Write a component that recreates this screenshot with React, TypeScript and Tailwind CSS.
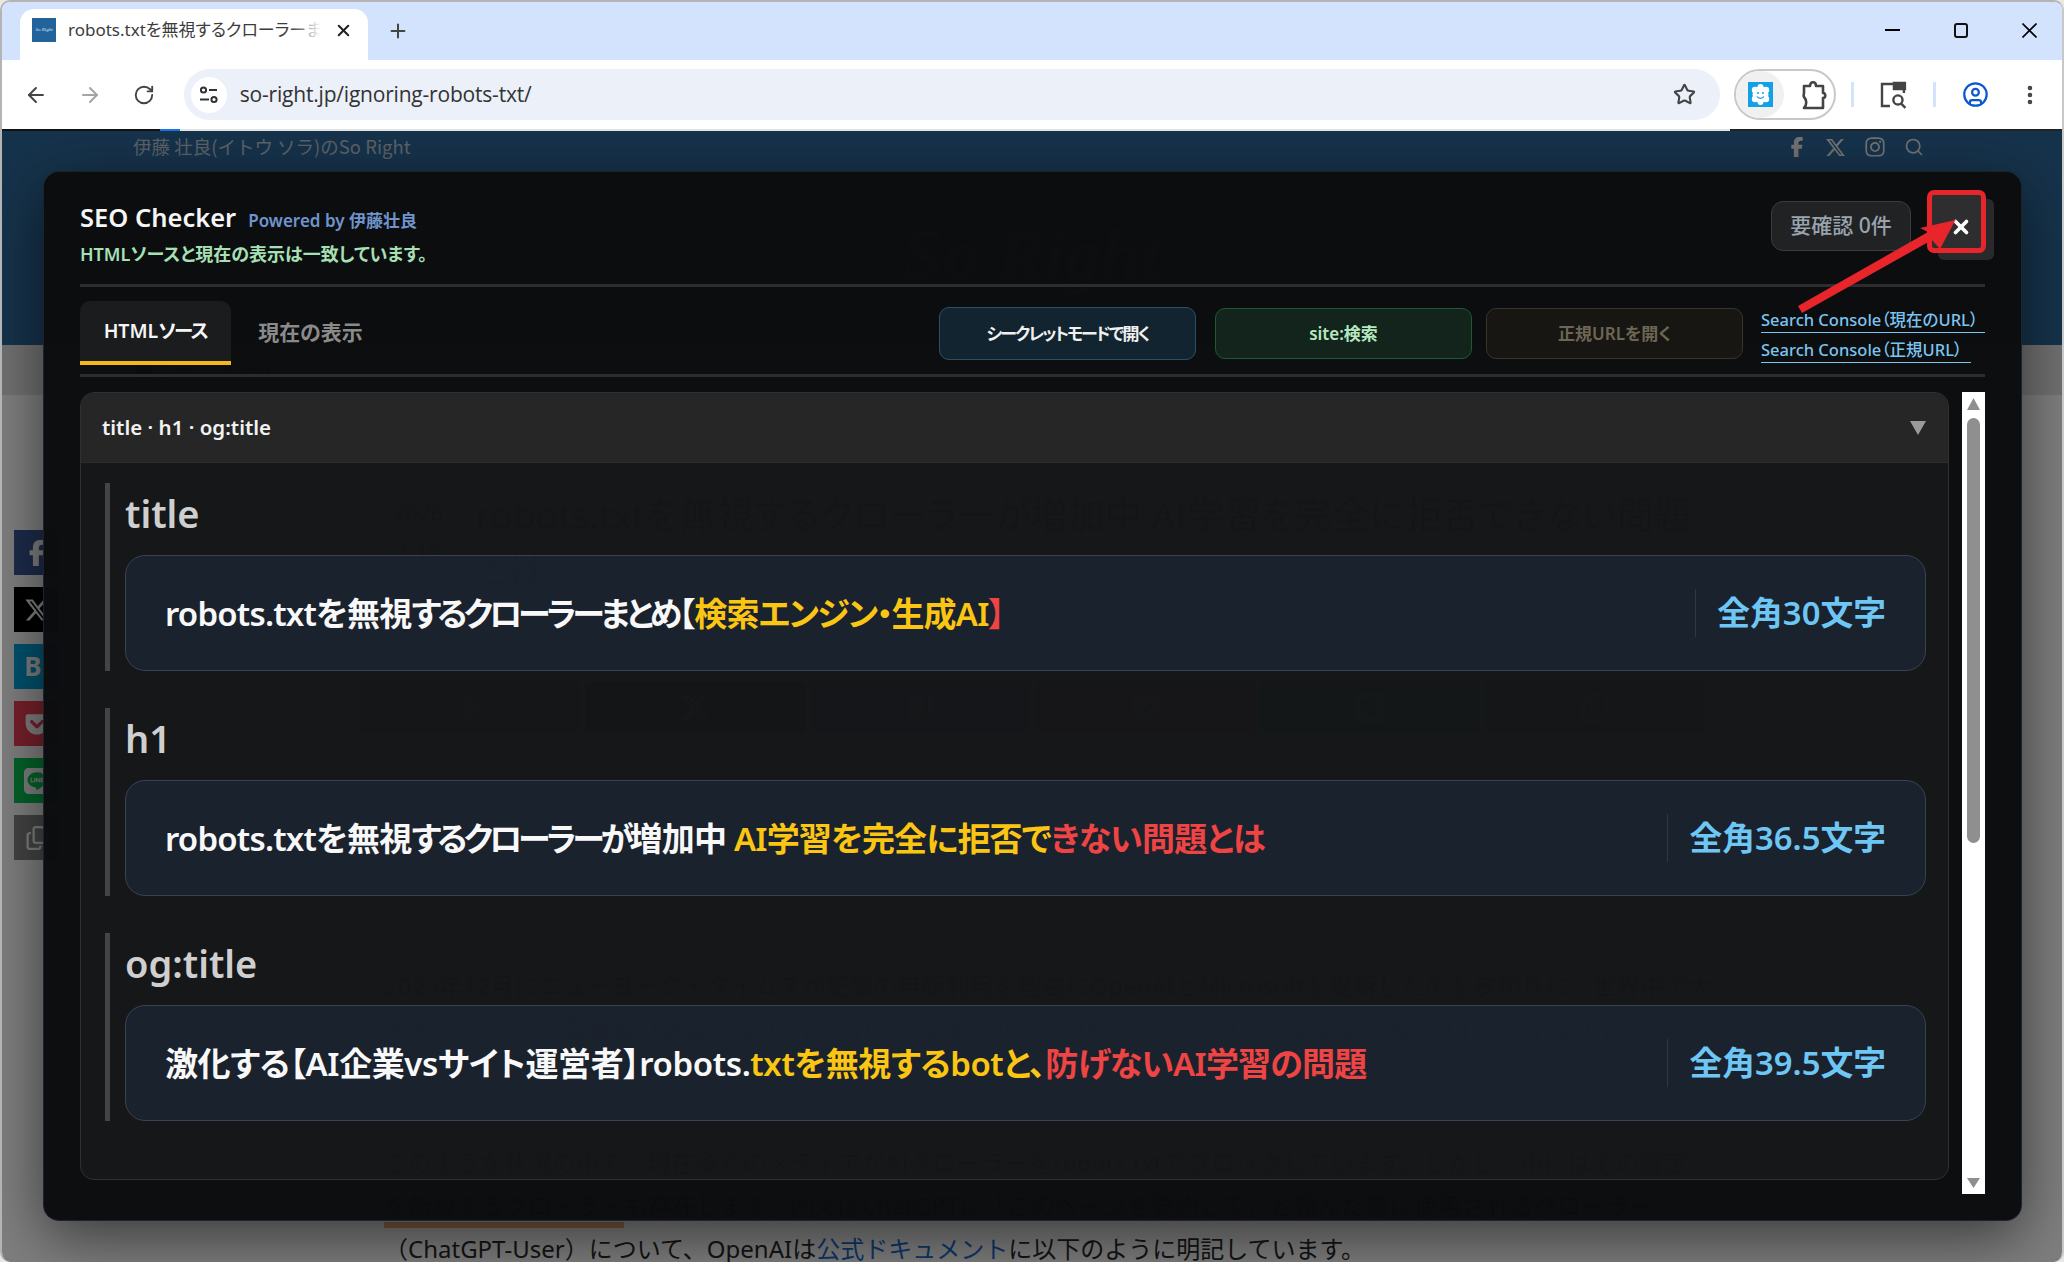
import { ArrowLeft, ArrowRight, RotateCw, Star, Plus, X, EllipsisVertical, CircleUser, Search } from "lucide-react";
import { FaFacebookF, FaXTwitter, FaInstagram, FaGetPocket, FaLine, FaRegCopy } from "react-icons/fa6";

const font = "font-['Noto_Sans','Noto_Sans_CJK_JP',sans-serif] [font-feature-settings:'palt']";
const K = "tracking-[-4px]";
const K2 = "tracking-[-1.6px]";
const Y = "text-[#fbc613]";
const R = "text-[#ef4444]";

function Card({ children, count }: { children: React.ReactNode; count: string }) {
  return (
    <div className="h-[116px] flex items-center rounded-[20px] border border-[#3a4252] bg-[#1e2a3a]/60 pl-[39px] pr-[39px]">
      <div className="flex-1 whitespace-nowrap text-[33px] tracking-[-0.8px] font-semibold text-[#f8f8f8] leading-none">{children}</div>
      <div className="h-[48px] border-l border-[#303644] pl-[21px] flex items-center text-[32.8px] font-semibold text-[#6ec6f5] leading-none whitespace-nowrap">{count}</div>
    </div>
  );
}

function Section({ label, children, count }: { label: string; children: React.ReactNode; count: string }) {
  return (
    <div className="border-l-[5px] border-[#444] pl-[15px] mb-[37px]">
      <div className="h-[72px] flex items-center pb-[12px] text-[38px] font-semibold leading-none text-[#cfcfcf]">{label}</div>
      <Card count={count}>{children}</Card>
    </div>
  );
}

export default function App() {
  return (
    <div className={`relative w-[2064px] h-[1262px] bg-[#e8e8e8] overflow-hidden ${font}`}>
      <div className="w-full h-full flex flex-col rounded-[10px] overflow-hidden border-2 border-b-0 border-[#b4b4b4] border-r-[#c8c8c8]">
        {/* tab strip */}
        <div className="h-[58px] shrink-0 bg-[#d3e3fd] flex items-end pl-[18px]">
          <div className="relative w-[348px] h-[51px] bg-white rounded-t-[14px] flex items-center pl-[12px] pb-[9px]">
            <div className="w-[24px] h-[24px] bg-[#22639c] flex items-center justify-center text-[5px] italic text-[#dfe8f0] font-['Liberation_Serif',serif] whitespace-nowrap">So Right</div>
            <div className="relative ml-[12px] w-[253px] overflow-hidden whitespace-nowrap text-[17px] text-[#3c3c3c] leading-[24px]">
              robots.txtを無視するクローラーまとめ
              <div className="absolute right-0 top-0 bottom-0 w-[30px] bg-gradient-to-r from-transparent to-white"></div>
            </div>
            <X size={19} strokeWidth={2.6} className="ml-[13px] text-[#222]" />
          </div>
          <div className="h-[51px] flex items-center ml-[19px] pb-[8px]">
            <Plus size={22} strokeWidth={2.2} className="text-[#444]" />
          </div>
          <div className="flex-1"></div>
          <div className="h-[58px] flex items-center gap-[54px] pr-[25px] pb-[2px]">
            <div className="w-[15px] h-[2px] bg-black"></div>
            <div className="w-[14px] h-[15px] rounded-[3px] border-2 border-[#111]"></div>
            <svg width="15" height="15" viewBox="0 0 15 15" stroke="#000" strokeWidth="1.6"><path d="M0.5 0.5l14 14M14.5 0.5l-14 14" /></svg>
          </div>
        </div>
        {/* toolbar */}
        <div className="h-[69px] shrink-0 bg-white flex items-center pl-[22px] pr-[20px]">
          <ArrowLeft size={24} strokeWidth={2} className="text-[#444]" />
          <ArrowRight size={24} strokeWidth={2} className="ml-[30px] text-[#a5a5a5]" />
          <RotateCw size={22} strokeWidth={2.1} className="ml-[31px] text-[#444]" />
          <div className="ml-[29px] w-[1541px] h-[51px] rounded-full bg-[#ebf0f9] flex items-center pl-[7px] pr-[24px]">
            <div className="w-[36px] h-[36px] rounded-full bg-white flex items-center justify-center">
              <svg width="20" height="20" viewBox="0 0 20 20" fill="none" stroke="#333" strokeWidth="2">
                <circle cx="4.5" cy="5" r="2.6" />
                <path d="M10 5h8" />
                <path d="M1 14.5h9" />
                <circle cx="15" cy="14.5" r="2.6" />
              </svg>
            </div>
            <span className="ml-[13px] text-[21px] text-[#333] font-['Open_Sans',sans-serif] tracking-[-0.2px] flex-1 whitespace-nowrap">so-right.jp/ignoring-robots-txt/</span>
            <Star size={23} strokeWidth={2.2} className="text-[#444]" />
          </div>
          <div className="ml-[14px] w-[103px] h-[51px] rounded-full border-2 border-[#c8c8c8] flex items-center overflow-hidden">
            <div className="w-[48px] h-full bg-[#f0f0f0] rounded-r-full flex items-center justify-center pl-[2px]">
              <svg width="25" height="25" viewBox="0 0 25 25">
                <rect width="25" height="25" fill="#12a0e6" />
                <circle cx="12.5" cy="12.5" r="8" fill="#fff" />
                <circle cx="7" cy="8" r="3.2" fill="#fff" />
                <circle cx="18" cy="8" r="3.2" fill="#fff" />
                <circle cx="7" cy="17" r="3.2" fill="#fff" />
                <circle cx="18" cy="17" r="3.2" fill="#fff" />
                <circle cx="12.5" cy="5" r="3" fill="#fff" />
                <circle cx="12.5" cy="20" r="3" fill="#fff" />
                <circle cx="10" cy="11" r="1" fill="#12a0e6" />
                <circle cx="15" cy="11" r="1" fill="#12a0e6" />
                <path d="M9 14.5c1.5 2.4 5.5 2.4 7 0" stroke="#12a0e6" strokeWidth="1.3" fill="none" />
              </svg>
            </div>
            <svg className="ml-[17px]" width="26" height="30" viewBox="0 0 26 30" fill="none" stroke="#444" strokeWidth="2.6" strokeLinejoin="round">
              <path d="M3 6h6c0-5 6-5 6 0h7v7c3 0 3 5 0 5v10H3c3-3 3-8 0-11-1-2 0-3 0-4z" />
            </svg>
          </div>
          <div className="ml-[15px] w-[3px] h-[25px] bg-[#d3e3fd]"></div>
          <svg className="ml-[26px]" width="28" height="30" viewBox="0 0 28 30" fill="none" stroke="#444" strokeWidth="2.4">
            <path d="M10 26H2V4h22v9" />
            <path d="M14 3h11v6H14z" fill="#444" />
            <circle cx="18" cy="20" r="4.6" />
            <path d="M21.5 24l4 4" />
          </svg>
          <div className="ml-[25px] w-[3px] h-[25px] bg-[#d3e3fd]"></div>
          <CircleUser size={27} strokeWidth={2} className="ml-[26px] text-[#0b57d0]" />
          <EllipsisVertical size={24} strokeWidth={2.6} className="ml-[29px] text-[#444]" />
        </div>
        <div className="h-[2px] shrink-0 flex">
          <div className="w-[158px] bg-[#111]"></div>
          <div className="w-[20px] bg-[#1a73e8]"></div>
          <div className="w-[1550px] bg-[#e3e3e3]"></div>
          <div className="flex-1 bg-[#222]"></div>
        </div>
        {/* page */}
        <div className="relative flex-1 bg-white overflow-hidden">
          <div className="h-[214px] bg-[#2d6699] relative">
            <div className="h-[32px] flex items-center pl-[131px] pr-[138px] text-[18.5px] text-[#b8c4cc] bg-[#2d6699]">
              <span className="flex-1 font-['Noto_Sans_CJK_JP',sans-serif] [font-feature-settings:normal]">伊藤 壮良(イトウ ソラ)のSo Right</span>
              <div className="flex items-center gap-[18px] text-[#e4e4e4]">
                <FaFacebookF size={20} />
                <FaXTwitter size={21} />
                <FaInstagram size={22} />
                <Search size={20} />
              </div>
            </div>
            <div className="mt-[56px] text-center text-[72px] italic font-bold font-['Liberation_Serif',serif] text-white leading-none">So Right</div>
          </div>
          <div className="h-[50px] bg-[#e2e2e2] pl-[133px] flex items-center text-[18px] text-[#555]">■ ホーム ＞ SEO ＞</div>
          <div className="pl-[358px]">
            <div className="flex items-start h-[287px] pt-[93px] text-[#111]">
              <div className="w-[116px] text-[22px] leading-[40px] pt-[4px] text-center">2026<br />2/18</div>
              <div className="w-[1222px] text-[37px] leading-[54px]">robots.txtを無視するクローラーが増加中 AI学習を完全に拒否できない問題とは</div>
            </div>
            <div className="flex gap-[5px] h-[51px]">
              <div className="w-[220px] bg-[#3b5998] text-white flex items-center justify-center"><FaFacebookF size={30} /></div>
              <div className="w-[220px] bg-black text-white flex items-center justify-center"><FaXTwitter size={30} /></div>
              <div className="w-[220px] bg-[#00a4de] text-white flex items-center justify-center text-[30px] font-bold">B!</div>
              <div className="w-[220px] bg-[#ef4056] text-white flex items-center justify-center"><FaGetPocket size={30} /></div>
              <div className="w-[220px] bg-[#06c755] text-white flex items-center justify-center"><FaLine size={30} /></div>
              <div className="w-[220px] bg-[#888] text-white flex items-center justify-center"><FaRegCopy size={30} /></div>
            </div>
            <div className="pl-[24px] pt-[231px] text-[24px] leading-[43px] text-[#2a2a2a] whitespace-nowrap [font-feature-settings:normal]">
              <p>2023年12月にニューヨーク・タイムズが記事の無断利用を理由にOpenAIとMicrosoftを提訴したのを皮切りに、世界中で大</p>
              <p>手メディア vs AI事業者の訴訟が繰り広げられています。2025年9月7日には、さらなる訴訟が起こされ、これまでになかった</p>
              <p className="h-[91px]"></p>
              <p>このような状況の中で、現在多くのメディアがAIクローラーをrobots.txtでブロックしています。しかし、中にはその設定</p>
              <p><span className="border-b-[6px] border-[#f2b27a]">を無視するクローラー</span>も存在します。例えばChatGPTに「このページを要約して」と頼んだ際に使用されるクローラー</p>
              <p>（ChatGPT-User）について、OpenAIは<span className="text-[#1a6fd0]">公式ドキュメント</span>に以下のように明記しています。</p>
            </div>
          </div>
          {/* floating share */}
          <div className="absolute left-[12px] top-[399px] w-[45px] flex flex-col gap-[12px] text-white text-[26px] font-bold">
            <div className="h-[45px] bg-[#3b5998] flex items-center justify-center"><FaFacebookF size={26} /></div>
            <div className="h-[45px] bg-black flex items-center justify-center"><FaXTwitter size={26} /></div>
            <div className="h-[45px] bg-[#00a4de] flex items-center justify-center">B!</div>
            <div className="h-[45px] bg-[#ef4056] flex items-center justify-center"><FaGetPocket size={26} /></div>
            <div className="h-[45px] bg-[#06c755] flex items-center justify-center"><FaLine size={26} /></div>
            <div className="h-[45px] bg-[#888] flex items-center justify-center"><FaRegCopy size={24} /></div>
          </div>
          {/* overlay + modal */}
          <div className="absolute inset-0 bg-black/50 pl-[41px] pt-[40px] pr-[40px] pb-[41px]">
            <div className="h-full rounded-[16px] border border-[#2a3440]/60 bg-[#0b0c0e]/[0.98] shadow-[0_16px_60px_rgba(0,0,0,0.55)] pl-[36px] pr-[36px] pt-[20px] flex flex-col">
              {/* header */}
              <div className="h-[95px] shrink-0 flex items-start border-b-[3px] border-[#2d2d2f]">
                <div className="flex-1 pt-[13px]">
                  <div className="flex items-baseline gap-[12px] h-[38px]">
                    <span className="text-[25.5px] font-semibold text-[#f5f5f5] leading-none">SEO Checker</span>
                    <span className="text-[17px] font-semibold text-[#6f94cc] leading-none">Powered by 伊藤壮良</span>
                  </div>
                  <div className="mt-[2px] text-[18px] font-semibold text-[#a7e0b5] leading-none">HTMLソースと現在の表示は一致しています。</div>
                </div>
                <div className="mt-[9px] w-[140px] h-[50px] rounded-[12px] border border-[#3a3c3e] bg-[#202224] flex items-center justify-center text-[21px] font-medium text-[#9aa3ad] mr-[18px]">要確認 0件</div>
                <div className="relative w-[56px] h-[61px] rounded-[6px] bg-[#2e2e30] shadow-[9px_7px_0_#2a2a2c] flex items-center justify-center pl-[8px] pt-[8px]">
                  <X size={22} strokeWidth={4} className="text-white" />
                  <div className="absolute -left-[2px] -top-[2px] w-[59px] h-[63px] rounded-[7px] border-[5px] border-[#e8252a]"></div>
                </div>
              </div>
              {/* tabs row */}
              <div className="h-[90px] shrink-0 flex items-start border-b-[3px] border-[#2d2d2f] pt-[14px]">
                <div className="w-[151px] h-[64px] rounded-t-[10px] bg-[#1b1c1e] border-b-[4px] border-[#f5b71f] flex items-center justify-center text-[19.5px] font-semibold text-[#f5f5f5]">HTML<span className="tracking-[-1.6px]">ソース</span></div>
                <div className="w-[151px] h-[64px] flex items-center justify-center text-[21px] font-semibold text-[#8a8a8a] pl-[8px]">現在の表示</div>
                <div className="flex-1"></div>
                <div className="mt-[6px] w-[257px] h-[53px] rounded-[10px] border border-[#2c5068] bg-[#12242f] flex items-center justify-center text-[17px] font-semibold text-[#f0f0f0] tracking-[-1.9px] mr-[1px]">シークレットモードで開く</div>
                <div className="mt-[7px] ml-[18px] w-[257px] h-[51px] rounded-[10px] border border-[#1d5a33] bg-[#12241b] flex items-center justify-center text-[17px] font-semibold text-[#b5e8c0]">site:検索</div>
                <div className="mt-[7px] ml-[14px] w-[257px] h-[51px] rounded-[10px] border border-[#3a3428] bg-[#171613] flex items-center justify-center text-[17px] font-semibold text-[#6d6654]">正規URLを開く</div>
                <div className="ml-[18px] w-[224px] mt-[7px] text-[16.5px] font-medium text-[#7cc4ef] leading-none whitespace-nowrap">
                  <div className="h-[25px] border-b border-[#7cc4ef] flex items-center">Search Console（現在のURL）</div>
                  <div className="mt-[5px] w-[210px] h-[25px] border-b border-[#7cc4ef] flex items-center">Search Console（正規URL）</div>
                </div>
              </div>
              {/* body */}
              <div className="flex-1 min-h-0 flex gap-[13px] mt-[15px] mb-[26px]">
                <div className="flex-1 rounded-[14px] border border-[#303030] bg-white/[0.04] mb-[14px] overflow-hidden flex flex-col">
                  <div className="h-[70px] shrink-0 bg-[#262626] border-b border-[#2c2c2c] flex items-center pl-[21px] pr-[22px]">
                    <span className="flex-1 text-[20.5px] font-semibold text-[#f2f2f2]">title · h1 · og:title</span>
                    <svg width="16" height="14" viewBox="0 0 16 14"><path d="M0 0h16L8 14z" fill="#9a9a9a" /></svg>
                  </div>
                  <div className="pl-[24px] pr-[22px] pt-[20px]">
                    <Section label="title" count="全角30文字">
                      robots.txtを無視<span className={K}>するクローラーまとめ</span>【<span className={Y}>検索<span className={K2}>エンジン・</span>生成AI</span><span className={R}>】</span>
                    </Section>
                    <Section label="h1" count="全角36.5文字">
                      robots.txtを無視<span className={K}>するクローラーが</span>増加中 <span className={Y}>AI学習を完全に拒否で</span><span className={R}>きない問題とは</span>
                    </Section>
                    <Section label="og:title" count="全角39.5文字">
                      <span className="tracking-[-0.4px]">激化する【AI企業vsサイト運営者】robots.<span className={Y}>txtを無視するbotと、</span></span><span className={R}>防げないAI学習の問題</span>
                    </Section>
                  </div>
                </div>
                <div className="w-[23px] bg-white flex flex-col items-center px-[5px] py-[6px]">
                  <svg width="13" height="12" viewBox="0 0 13 12"><path d="M6.5 0L13 12H0z" fill="#8f8f8f" /></svg>
                  <div className="mt-[8px] w-[13px] h-[425px] rounded-full bg-[#8f8f8f]"></div>
                  <div className="flex-1"></div>
                  <svg width="13" height="10" viewBox="0 0 13 10"><path d="M0 0h13L6.5 10z" fill="#8f8f8f" /></svg>
                </div>
              </div>
            </div>
          </div>
        </div>
      </div>
      {/* annotation arrow */}
      <svg className="absolute left-0 top-0 pointer-events-none" width="2064" height="1262" viewBox="0 0 2064 1262">
        <path d="M1798 306L1928 232L1920 228L1955.5 220L1940 249L1932 240L1802 313z" fill="#e8252a" />
      </svg>
    </div>
  );
}
